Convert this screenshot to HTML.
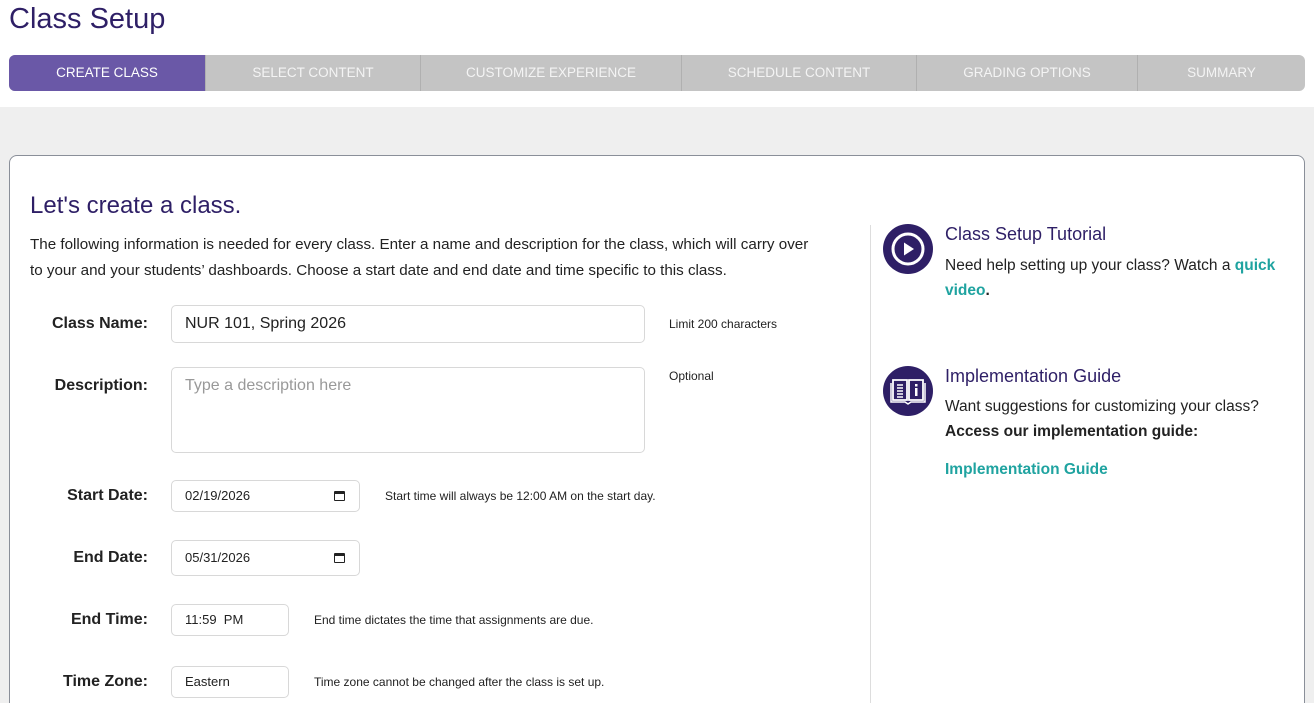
<!DOCTYPE html>
<html style="overflow:hidden;height:703px"><head><style>
*{margin:0;padding:0;box-sizing:border-box}
body{width:1314px;height:703px;overflow:hidden;background:#fff;font-family:"Liberation Sans",sans-serif;position:relative;color:#222}
.a{position:absolute;white-space:nowrap}
.tabs{position:absolute;left:9px;top:55px;width:1296px;height:36px;background:#c4c4c4;border-radius:6px;overflow:hidden}
.tab{position:absolute;top:0;height:36px;line-height:36px;text-align:center;color:#f4f4f4;font-size:13.5px;border-left:1px solid #b0b0b0}
.gray{position:absolute;left:0;top:107px;width:1314px;height:596px;background:#efefef}
.card{position:absolute;left:9px;top:155px;width:1296px;height:560px;background:#fff;border:1px solid #8a8f99;border-radius:8px}
.lbl{font-weight:bold;font-size:16px;text-align:right;width:150px;left:0}
.inp{position:absolute;border:1px solid #d8d8d8;border-radius:5px;background:#fff;font-size:16px;color:#222;padding-left:13px}
.note{font-size:12px;color:#222}
.teal{color:#1fa3a0;font-weight:bold}
.cal{position:absolute;right:14px;top:50%;width:11px;height:10px;margin-top:-5px;border:1.5px solid #222;border-top-width:3px;border-radius:1px}
</style></head><body>
<div class="a" style="left:9px;top:3px;font-size:29px;color:#2e1f66">Class Setup</div>
<div class="tabs">
<div class="tab" style="left:0;width:196px;background:#6a58a7;border:none;color:#fff">CREATE CLASS</div>
<div class="tab" style="left:196px;width:215px">SELECT CONTENT</div>
<div class="tab" style="left:411px;width:261px">CUSTOMIZE EXPERIENCE</div>
<div class="tab" style="left:672px;width:235px">SCHEDULE CONTENT</div>
<div class="tab" style="left:907px;width:221px">GRADING OPTIONS</div>
<div class="tab" style="left:1128px;width:168px">SUMMARY</div>
</div>
<div class="gray"></div>
<div class="card"></div>
<div class="a" style="left:870px;top:225px;width:1px;height:478px;background:#ddd"></div>
<div class="a" style="left:30px;top:192px;font-size:24px;color:#2e1f66">Let's create a class.</div>
<div class="a" style="left:30px;top:232px;font-size:15.2px;line-height:26px;color:#222">The following information is needed for every class. Enter a name and description for the class, which will carry over<br>to your and your students’ dashboards. Choose a start date and end date and time specific to this class.</div>

<div class="a lbl" style="top:315px;width:148px">Class Name:</div>
<div class="inp" style="left:171px;top:305px;width:474px;height:38px;line-height:36px">NUR 101, Spring 2026</div>
<div class="a note" style="left:669px;top:317px">Limit 200 characters</div>

<div class="a lbl" style="top:377px;width:148px">Description:</div>
<div class="inp" style="left:171px;top:367px;width:474px;height:86px;padding-top:9px;color:#999">Type a description here</div>
<div class="a note" style="left:669px;top:369px">Optional</div>

<div class="a lbl" style="top:487px;width:148px">Start Date:</div>
<div class="inp" style="left:171px;top:480px;width:189px;height:32px;line-height:30px;font-size:13px">02/19/2026<span class="cal"></span></div>
<div class="a note" style="left:385px;top:489px">Start time will always be 12:00 AM on the start day.</div>

<div class="a lbl" style="top:549px;width:148px">End Date:</div>
<div class="inp" style="left:171px;top:540px;width:189px;height:36px;line-height:34px;font-size:13px">05/31/2026<span class="cal"></span></div>

<div class="a lbl" style="top:611px;width:148px">End Time:</div>
<div class="inp" style="left:171px;top:604px;width:118px;height:32px;line-height:30px;font-size:13px">11:59&nbsp; PM</div>
<div class="a note" style="left:314px;top:613px">End time dictates the time that assignments are due.</div>

<div class="a lbl" style="top:673px;width:148px">Time Zone:</div>
<div class="inp" style="left:171px;top:666px;width:118px;height:32px;line-height:30px;font-size:13px">Eastern</div>
<div class="a note" style="left:314px;top:675px">Time zone cannot be changed after the class is set up.</div>

<svg class="a" style="left:883px;top:224px" width="50" height="50" viewBox="0 0 50 50"><circle cx="25" cy="25" r="25" fill="#2e1f66"/><circle cx="25" cy="25" r="15" fill="none" stroke="#fff" stroke-width="3"/><path d="M21 18.5 L31 25 L21 31.5Z" fill="#fff"/></svg>
<div class="a" style="left:945px;top:224px;font-size:18px;color:#2e1f66">Class Setup Tutorial</div>
<div class="a" style="left:945px;top:253px;font-size:15.5px;line-height:25px;color:#222">Need help setting up your class? Watch a <span class="teal">quick</span><br><span class="teal">video</span><b>.</b></div>

<svg class="a" style="left:883px;top:366px" width="50" height="50" viewBox="0 0 50 50"><circle cx="25" cy="25" r="25" fill="#2e1f66"/><path d="M10 14 H24 V34 H10Z M26 14 H40 V34 H26Z" fill="none" stroke="#fff" stroke-width="1.8"/><path d="M8 17 V36 H22 L25 38 L28 36 H42 V17" fill="none" stroke="#fff" stroke-width="1.5"/><path d="M14 19h6M14 22h6M14 25h6M14 28h6M14 31h6" stroke="#fff" stroke-width="1.5"/><rect x="32" y="18" width="2.5" height="2.5" fill="#fff"/><rect x="32" y="22" width="2.5" height="8" fill="#fff"/></svg>
<div class="a" style="left:945px;top:366px;font-size:18px;color:#2e1f66">Implementation Guide</div>
<div class="a" style="left:945px;top:394px;font-size:15.5px;line-height:25px;color:#222">Want suggestions for customizing your class?<br><b>Access our implementation guide:</b></div>
<div class="a teal" style="left:945px;top:461px;font-size:15.5px">Implementation Guide</div>
</body></html>
